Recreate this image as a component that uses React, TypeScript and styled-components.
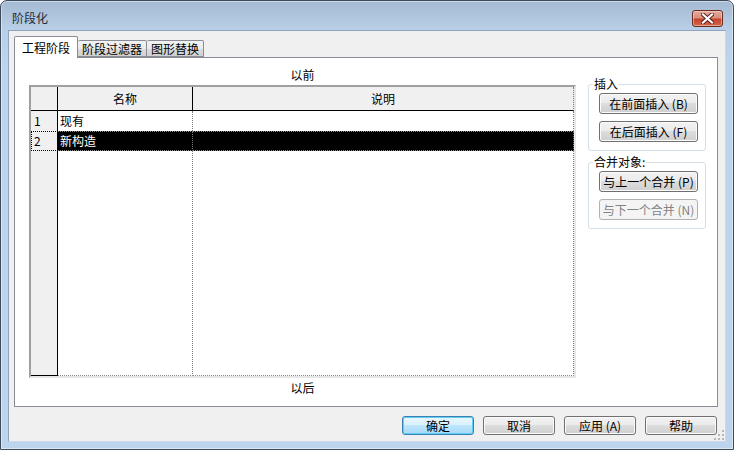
import React from 'react';
import styled, { createGlobalStyle } from 'styled-components';

const GlobalStyle = createGlobalStyle`
  html, body {
    margin: 0;
    padding: 0;
    background: #ffffff;
  }
  body {
    font-family: 'Noto Sans CJK SC', 'Liberation Sans', sans-serif;
    font-size: 12px;
    color: #000000;
  }
`;

const Frame = styled.div`
  position: relative;
  box-sizing: border-box;
  width: 734px;
  height: 450px;
  border: 1px solid #3b4b5c;
  border-radius: 7px 7px 0 0;
  padding: 0 7px 7px 7px;
  display: flex;
  flex-direction: column;
  background: linear-gradient(to bottom, #a4bad3 0px, #b8cfe7 28px, #bcd4ec 60px, #bdd5ec 100%);
  box-shadow: inset 0 0 0 1px rgba(255, 255, 255, 0.45);
`;

const TitleBar = styled.div`
  height: 29px;
  box-sizing: border-box;
  padding: 5px 3px 0 4px;
  display: flex;
  align-items: center;
  flex-shrink: 0;
`;

const Title = styled.div`
  font-size: 12px;
  line-height: 14px;
  color: #1e2a38;
`;

const CloseButton = styled.div`
  margin-left: auto;
  width: 31px;
  height: 17px;
  box-sizing: border-box;
  border: 1px solid #6b2b22;
  border-radius: 3px;
  background: linear-gradient(to bottom, #e3aa9c 0%, #d98f7e 45%, #c4432c 55%, #cf6a4a 100%);
  box-shadow: inset 0 0 0 1px rgba(255, 220, 210, 0.5);
  display: flex;
  align-items: center;
  justify-content: center;
`;

const Client = styled.div`
  position: relative;
  flex: 1;
  box-sizing: border-box;
  background: #f0f0f0;
  border: 1px solid #8ea3bc;
  border-bottom-color: #c9d9ea;
  border-right-color: #c9d9ea;
  padding: 5px 7px 6px 5px;
  display: flex;
  flex-direction: column;
`;

const TabStrip = styled.div`
  display: flex;
  align-items: flex-end;
  height: 21px;
  position: relative;
  z-index: 1;
`;

const Tab = styled.div<{ $active?: boolean }>`
  box-sizing: border-box;
  height: ${({ $active }) => ($active ? '22px' : '17px')};
  margin-bottom: ${({ $active }) => ($active ? '-1px' : '0')};
  padding: ${({ $active }) => ($active ? '2px 7px 0 7px' : '0 4px 0 4px')};
  border: 1px solid #898c95;
  border-bottom: ${({ $active }) => ($active ? 'none' : '1px solid #898c95')};
  border-left: ${({ $active }) => ($active ? '1px solid #898c95' : 'none')};
  border-radius: 2px 2px 0 0;
  background: ${({ $active }) =>
    $active ? '#ffffff' : 'linear-gradient(to bottom, #f2f2f2 0%, #ebebeb 50%, #dddddd 51%, #cfcfcf 100%)'};
  font-size: 12px;
  line-height: ${({ $active }) => ($active ? '17px' : '15px')};
  white-space: nowrap;
`;

const TabPanel = styled.div`
  flex: 1;
  box-sizing: border-box;
  background: #ffffff;
  border: 1px solid #898c95;
  padding: 7px 11px 0 14px;
  display: flex;
`;

const GridColumn = styled.div`
  width: 547px;
  display: flex;
  flex-direction: column;
`;

const Caption = styled.div`
  height: 20px;
  line-height: 20px;
  text-align: center;
  font-size: 12px;
`;

const Grid = styled.div`
  box-sizing: border-box;
  height: 293px;
  border: 2px solid #e6e6e6;
  border-top-color: #a0a0a0;
  border-left-color: #a0a0a0;
  display: grid;
  grid-template-columns: 27px 135px 1fr;
  grid-template-rows: 24px 20px 20px 1fr;
`;

const HeadCell = styled.div`
  box-sizing: border-box;
  background: #f0f0f0;
  border-right: 1px solid #000000;
  border-bottom: 1px solid #000000;
  text-align: center;
  line-height: 23px;
`;

const LastHeadCell = styled(HeadCell)`
  border-right: 1px dotted #7a7a7a;
`;

const RowHead = styled.div<{ $selected?: boolean; $filler?: boolean }>`
  box-sizing: border-box;
  background: #f0f0f0;
  border-right: 1px solid #000000;
  border-bottom: ${({ $filler }) => ($filler ? '1px solid #000000' : 'none')};
  padding-left: 3px;
  line-height: 20px;
  outline: ${({ $selected }) => ($selected ? '1px dotted #000000' : 'none')};
  outline-offset: -1px;
`;

const Cell = styled.div<{ $selected?: boolean; $last?: boolean; $filler?: boolean }>`
  box-sizing: border-box;
  background: ${({ $selected }) => ($selected ? '#000000' : '#ffffff')};
  color: ${({ $selected }) => ($selected ? '#ffffff' : '#000000')};
  border-right: 1px dotted #7a7a7a;
  border-top: ${({ $selected }) => ($selected ? '1px dotted #8a8a8a' : 'none')};
  border-bottom: ${({ $selected, $filler }) => ($selected || $filler ? '1px dotted #8a8a8a' : 'none')};
  padding-left: 2px;
  line-height: ${({ $selected }) => ($selected ? '18px' : '20px')};
  white-space: nowrap;
`;

const SideColumn = styled.div`
  width: 118px;
  margin-left: 12px;
  margin-top: 12px;
  display: flex;
  flex-direction: column;
  gap: 4px;
`;

const Group = styled.fieldset`
  margin: 0;
  padding: 2px 8px 8px 10px;
  border: 1px solid #d5dfe5;
  border-radius: 3px;
  display: flex;
  flex-direction: column;
  gap: 7px;
  min-width: 0;
`;

const GroupTitle = styled.legend`
  padding: 0 1px;
  margin-left: -6px;
  font-size: 12px;
  line-height: 14px;
`;

const Button = styled.button<{ $wide?: boolean; $primary?: boolean }>`
  box-sizing: border-box;
  width: ${({ $wide }) => ($wide ? '99px' : '72px')};
  height: ${({ $wide }) => ($wide ? '21px' : '19px')};
  margin: 0;
  padding: 0;
  font-family: 'Noto Sans CJK SC', 'Liberation Sans', sans-serif;
  font-size: 12px;
  line-height: 17px;
  color: #000000;
  border: 1px solid ${({ $primary }) => ($primary ? '#3c7fb1' : '#707070')};
  border-radius: 3px;
  background: ${({ $primary }) =>
    $primary
      ? 'linear-gradient(to bottom, #eaf6fd 0%, #d9f0fc 49%, #bee6fd 50%, #a7d9f5 100%)'
      : 'linear-gradient(to bottom, #f2f2f2 0%, #ebebeb 49%, #dddddd 50%, #cfcfcf 100%)'};
  box-shadow: inset 0 0 0 1px ${({ $primary }) => ($primary ? '#5ed0f5' : '#fbfbfb')};
  white-space: nowrap;

  &:disabled {
    border-color: #adb2b5;
    background: #f4f4f4;
    color: #838383;
    box-shadow: none;
  }
`;

const ButtonBar = styled.div`
  display: flex;
  justify-content: flex-end;
  gap: 9px;
  margin-top: 9px;
  padding-right: 1px;
`;

const Grip = styled.svg`
  position: absolute;
  right: 1px;
  bottom: 1px;
`;

const CloseGlyph = () => (
  <svg width="13" height="11" viewBox="0 0 13 11">
    <path d="M2 1.5 L11 9.5 M11 1.5 L2 9.5" stroke="#5a1f18" strokeWidth="4" strokeLinecap="square" />
    <path d="M2 1.5 L11 9.5 M11 1.5 L2 9.5" stroke="#ffffff" strokeWidth="2.2" strokeLinecap="square" />
  </svg>
);

const rows = [
  { no: '1', name: '现有', note: '' },
  { no: '2', name: '新构造', note: '', selected: true },
];

export default function App() {
  return (
    <>
      <GlobalStyle />
      <Frame>
        <TitleBar>
          <Title>阶段化</Title>
          <CloseButton>
            <CloseGlyph />
          </CloseButton>
        </TitleBar>
        <Client>
          <TabStrip>
            <Tab $active>工程阶段</Tab>
            <Tab>阶段过滤器</Tab>
            <Tab>图形替换</Tab>
          </TabStrip>
          <TabPanel>
            <GridColumn>
              <Caption>以前</Caption>
              <Grid>
                <HeadCell />
                <HeadCell>名称</HeadCell>
                <LastHeadCell>说明</LastHeadCell>
                {rows.map((r) => (
                  <React.Fragment key={r.no}>
                    <RowHead $selected={r.selected}>{r.no}</RowHead>
                    <Cell $selected={r.selected}>{r.name}</Cell>
                    <Cell $selected={r.selected} $last>
                      {r.note}
                    </Cell>
                  </React.Fragment>
                ))}
                <RowHead $filler />
                <Cell $filler />
                <Cell $filler $last />
              </Grid>
              <Caption>以后</Caption>
            </GridColumn>
            <SideColumn>
              <Group>
                <GroupTitle>插入</GroupTitle>
                <Button $wide>在前面插入 (B)</Button>
                <Button $wide>在后面插入 (F)</Button>
              </Group>
              <Group>
                <GroupTitle>合并对象:</GroupTitle>
                <Button $wide>与上一个合并 (P)</Button>
                <Button $wide disabled>
                  与下一个合并 (N)
                </Button>
              </Group>
            </SideColumn>
          </TabPanel>
          <ButtonBar>
            <Button $primary>确定</Button>
            <Button>取消</Button>
            <Button>应用 (A)</Button>
            <Button>帮助</Button>
          </ButtonBar>
          <Grip width="10" height="10" viewBox="0 0 10 10">
            {[
              [8, 0],
              [8, 4],
              [4, 4],
              [8, 8],
              [4, 8],
              [0, 8],
            ].map(([x, y]) => (
              <rect key={`${x}-${y}`} x={x} y={y} width="2" height="2" fill="#b8b8b8" />
            ))}
          </Grip>
        </Client>
      </Frame>
    </>
  );
}
